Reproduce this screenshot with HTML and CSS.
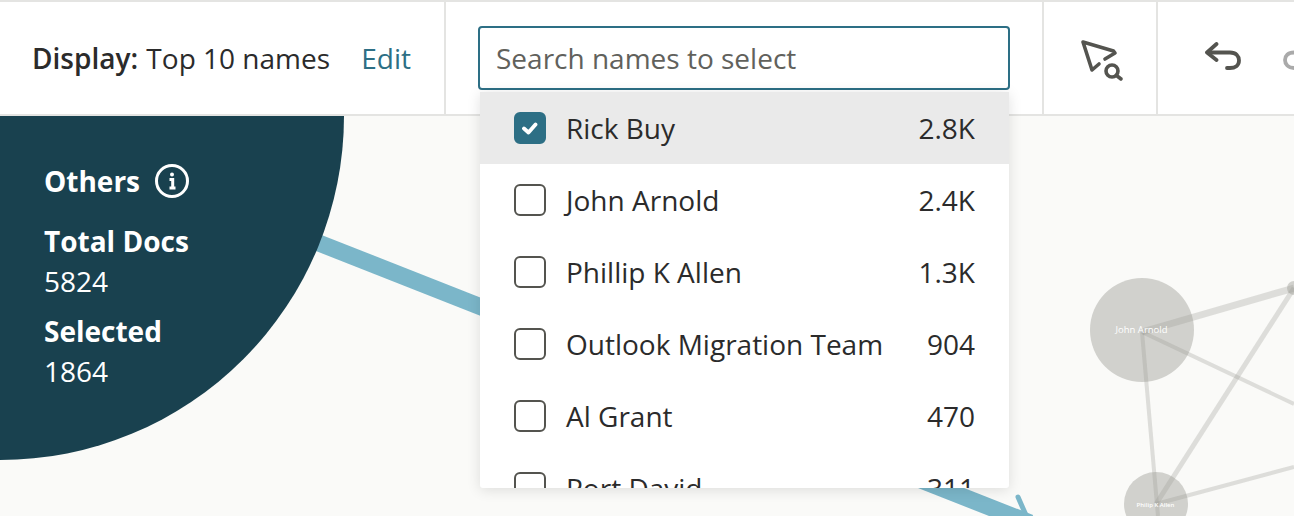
FILE: index.html
```html
<!DOCTYPE html>
<html lang="en">
<head>
<meta charset="utf-8">
<title>Names</title>
<link rel="stylesheet" href="styles.css">
</head>
<body>
<div class="app">
  <header class="toolbar">
    <div class="display-cell">
      <div class="display-text"><b>Display:</b> Top 10 names</div>
      <a class="edit-link">Edit</a>
    </div>
    <div class="search-cell">
      <div class="search-box">Search names to select</div>
    </div>
    <div class="icon-cell">
      <svg class="icon-select" width="48" height="44" viewBox="0 0 48 44" fill="none" stroke="#54544f" stroke-width="3.600" stroke-linecap="round" stroke-linejoin="round">
        <path d="M27 21 37 15 35.500 13 5 4 14 32 21 26"/>
        <circle cx="34" cy="33" r="6"/>
        <path d="M38.500 37.500 43 41"/>
      </svg>
    </div>
    <div class="history-cell">
      <svg class="icon-undo" width="38" height="32" viewBox="0 0 38 32" fill="none" stroke="#54544f" stroke-width="3.800" stroke-linecap="round" stroke-linejoin="round">
        <path d="M11.500 2 2 10.500 11.500 18"/>
        <path d="M3 10.500H25C31 10.500 34 14 34 18.500C34 23.500 30 26 25 26H22"/>
      </svg>
      <svg class="icon-redo" width="20" height="32" viewBox="0 0 20 32" fill="none" stroke="#aaaaaa" stroke-width="3.800" stroke-linecap="round">
        <path d="M11 10.500C5 10.500 2 14 2 18C2 22 5 26 11 26"/>
      </svg>
    </div>
  </header>
  <main class="canvas">
    <svg class="graph" width="1294" height="400" viewBox="0 116 1294 400" fill="none">
      <path d="M300 235.600 1030 523" stroke="#7bb6c9" stroke-width="17"/>
      <path d="M1018 497 1029 522" stroke="#7bb6c9" stroke-width="5" stroke-linecap="round"/>
      <circle cx="0" cy="116" r="344" fill="#19414f"/>
      <g fill="#d1d1cd">
        <circle cx="1142" cy="330" r="52"/>
        <circle cx="1156" cy="504" r="32"/>
        <circle cx="1294" cy="288" r="7"/>
      </g>
      <g stroke="#9a9a94" stroke-opacity=".3">
        <path d="M1142 332 1294 288" stroke-width="7"/>
        <path d="M1142 332 1294 404" stroke-width="4"/>
        <path d="M1142 332 1158 516" stroke-width="4"/>
        <path d="M1156 504 1294 288" stroke-width="5"/>
        <path d="M1156 504 1294 467" stroke-width="4"/>
      </g>
      <text class="node-label" x="1141.500" y="333" text-anchor="middle">John Arnold</text>
      <text class="node-label node-label-small" x="1155.500" y="507" text-anchor="middle">Philip K Allen</text>
    </svg>
    <section class="summary">
      <h2 class="summary-title">Others
        <svg class="info-icon" width="34" height="34" viewBox="0 0 34 34" fill="none">
          <circle cx="17" cy="17" r="15.500" stroke="#fff" stroke-width="3"/>
          <circle cx="17" cy="10.500" r="2" fill="#fff"/>
          <path d="M14.500 15.500H17.700V23.500M14.500 24H20.500" stroke="#fff" stroke-width="3"/>
        </svg>
      </h2>
      <div class="stat"><b>Total Docs</b><span>5824</span></div>
      <div class="stat"><b>Selected</b><span>1864</span></div>
    </section>
    <div class="dropdown">
      <div class="row row-active">
        <span class="check check-on">
          <svg width="18" height="14" viewBox="0 0 18 14" fill="none" stroke="#fff" stroke-width="3.800" stroke-linecap="round" stroke-linejoin="round"><path d="M3 7.500 7.500 11.500 14.500 3.500"/></svg>
        </span>
        <span class="name">Rick Buy</span><span class="count">2.8K</span>
      </div>
      <div class="row"><span class="check"></span><span class="name">John Arnold</span><span class="count">2.4K</span></div>
      <div class="row"><span class="check"></span><span class="name">Phillip K Allen</span><span class="count">1.3K</span></div>
      <div class="row"><span class="check"></span><span class="name">Outlook Migration Team</span><span class="count">904</span></div>
      <div class="row"><span class="check"></span><span class="name">Al Grant</span><span class="count">470</span></div>
      <div class="row"><span class="check"></span><span class="name">Port David</span><span class="count">311</span></div>
    </div>
  </main>
</div>
</body>
</html>
```

FILE: styles.css
```css
* { box-sizing: border-box; }
html, body { margin: 0; height: 100%; overflow: hidden; }
body {
  font-family: "Open Sans", sans-serif;
  font-size: 28px;
  color: #2b2b2b;
  background: #fafaf8;
}
.app {
  display: flex;
  flex-direction: column;
  height: 516px;
  overflow: hidden;
  border-top: 2px solid #e4e4e2;
}
.toolbar {
  display: flex;
  flex: 0 0 114px;
  background: #fff;
  border-bottom: 2px solid #e4e4e2;
}
.display-cell {
  display: flex;
  flex: none;
  align-items: center;
  justify-content: space-between;
  width: 446px;
  padding: 0 33px 0 32px;
  border-right: 2px solid #e4e4e2;
}
.display-text b { font-weight: 600; margin-right: 1px; }
.edit-link { color: #2d6f85; }
.search-cell {
  flex: none;
  width: 598px;
  padding: 24px 32px 0;
  border-right: 2px solid #e4e4e2;
}
.search-box {
  height: 64px;
  line-height: 60px;
  padding-left: 16px;
  color: #61615c;
  background: #fff;
  border: 2px solid #2d6f85;
  border-radius: 4px;
}
.icon-cell {
  flex: none;
  width: 114px;
  border-right: 2px solid #e4e4e2;
  padding: 36px 0 0 34px;
}
.icon-select { display: block; }
.history-cell {
  display: flex;
  flex: 1;
  min-width: 0;
  gap: 40px;
  padding: 40px 0 0 47px;
  align-items: flex-start;
  overflow: hidden;
}
.icon-undo, .icon-redo { flex: none; }
.canvas {
  position: relative;
  flex: 1;
  background: #fafaf8;
}
.graph { position: absolute; inset: 0; display: block; }
.node-label { font-size: 9.500px; fill: #fff; font-family: "Open Sans", sans-serif; }
.node-label-small { font-size: 6px; font-weight: 600; }
.summary {
  position: absolute;
  left: 44px;
  top: 45px;
  color: #fff;
  line-height: 40px;
}
.summary-title {
  display: flex;
  align-items: center;
  gap: 15px;
  margin: 0 0 20px;
  font-size: 28px;
  font-weight: 700;
  line-height: 40px;
}
.stat { margin-bottom: 10px; }
.stat b, .stat span { display: block; }
.stat b { font-weight: 700; }
.dropdown {
  position: absolute;
  left: 480px;
  top: -24px;
  width: 529px;
  height: 396px;
  overflow: hidden;
  background: #fff;
  border-radius: 0 0 3px 3px;
  box-shadow: 0 2px 14px rgba(0,0,0,.12);
}
.row {
  display: flex;
  align-items: center;
  height: 72px;
  padding: 0 34px;
}
.row-active { background: #eaeaea; }
.check {
  display: flex;
  align-items: center;
  justify-content: center;
  flex: none;
  width: 32px;
  height: 32px;
  margin-right: 20px;
  background: #fff;
  border: 2px solid #54544f;
  border-radius: 6px;
}
.check-on { background: #2d6f85; border-color: #2d6f85; }
.name { flex: 1; }
```
